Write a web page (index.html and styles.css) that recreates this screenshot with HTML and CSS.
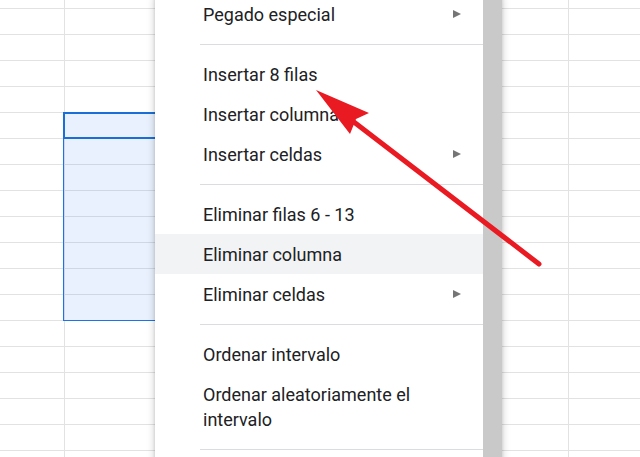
FILE: index.html
```html
<!DOCTYPE html>
<html lang="es">
<head>
<meta charset="utf-8">
<title>Menú contextual</title>
<link rel="stylesheet" href="styles.css">
</head>
<body>
<div class="sheet">
  <div class="selection">
    <div class="active-cell"></div>
  </div>

  <div class="menu">
    <ul class="menu-list">
      <li class="item has-sub">Pegado especial</li>
      <li class="sep"></li>
      <li class="item">Insertar 8 filas</li>
      <li class="item">Insertar columna</li>
      <li class="item has-sub">Insertar celdas</li>
      <li class="sep"></li>
      <li class="item">Eliminar filas 6 - 13</li>
      <li class="item hover">Eliminar columna</li>
      <li class="item has-sub">Eliminar celdas</li>
      <li class="sep"></li>
      <li class="item">Ordenar intervalo</li>
      <li class="item">Ordenar aleatoriamente el<br>intervalo</li>
      <li class="sep"></li>
    </ul>
    <div class="scrollbar"></div>
  </div>

  <svg class="arrow" width="640" height="457" viewBox="0 0 640 457" aria-hidden="true">
    <line x1="539" y1="264" x2="350" y2="119" stroke="#ea1a22" stroke-width="5" stroke-linecap="round"/>
    <polygon points="316,90 369,113 356,119 350,134" fill="#ea1a22"/>
  </svg>
</div>
</body>
</html>
```

FILE: styles.css
```css
* { box-sizing: border-box; }

html, body {
  margin: 0;
  padding: 0;
  width: 640px;
  height: 457px;
  overflow: hidden;
  background: #ffffff;
}

.sheet {
  position: relative;
  width: 640px;
  height: 457px;
  background-color: #ffffff;
  background-image:
    linear-gradient(to right, transparent 64px, #e2e2e2 64px, #e2e2e2 65px, transparent 65px),
    linear-gradient(to right, transparent 568px, #e2e2e2 568px, #e2e2e2 569px, transparent 569px),
    repeating-linear-gradient(to bottom, #e2e2e2 0, #e2e2e2 1px, transparent 1px, transparent 26px);
  background-position: 0 0, 0 0, 0 8px;
  font-family: Roboto, "Liberation Sans", Arial, sans-serif;
}

.selection {
  position: absolute;
  left: 63px;
  top: 112px;
  width: 100px;
  height: 209px;
  background: rgba(26, 115, 232, 0.1);
  border-left: 1px solid #1a73e8;
  border-bottom: 1px solid #1a73e8;
}

.active-cell {
  margin-left: -1px;
  height: 27px;
  border: 2px solid #1a6fd6;
  border-right: none;
}

.menu {
  position: absolute;
  left: 155px;
  top: -6px;
  width: 347px;
  height: 470px;
  display: flex;
  background: #ffffff;
  box-shadow: 0 2px 8px rgba(0, 0, 0, 0.22), 0 0 3px rgba(0, 0, 0, 0.12);
}

.menu-list {
  list-style: none;
  margin: 0;
  padding: 0;
  width: 328px;
  background: #ffffff;
}

.item {
  display: flex;
  align-items: center;
  justify-content: space-between;
  padding: 7.5px 22px 7.5px 48px;
  font-size: 18px;
  line-height: 25px;
  color: #202124;
  white-space: nowrap;
}

.item.hover {
  background: #f1f3f4;
}

.has-sub::after {
  content: "";
  width: 0;
  height: 0;
  border-left: 8px solid #757575;
  border-top: 4px solid transparent;
  border-bottom: 4px solid transparent;
}

.sep {
  height: 1px;
  margin: 10px 0 9px 45px;
  background: #dadce0;
}

.scrollbar {
  width: 19px;
  background: #c9c9c9;
}

.arrow {
  position: absolute;
  left: 0;
  top: 0;
  pointer-events: none;
}
```
